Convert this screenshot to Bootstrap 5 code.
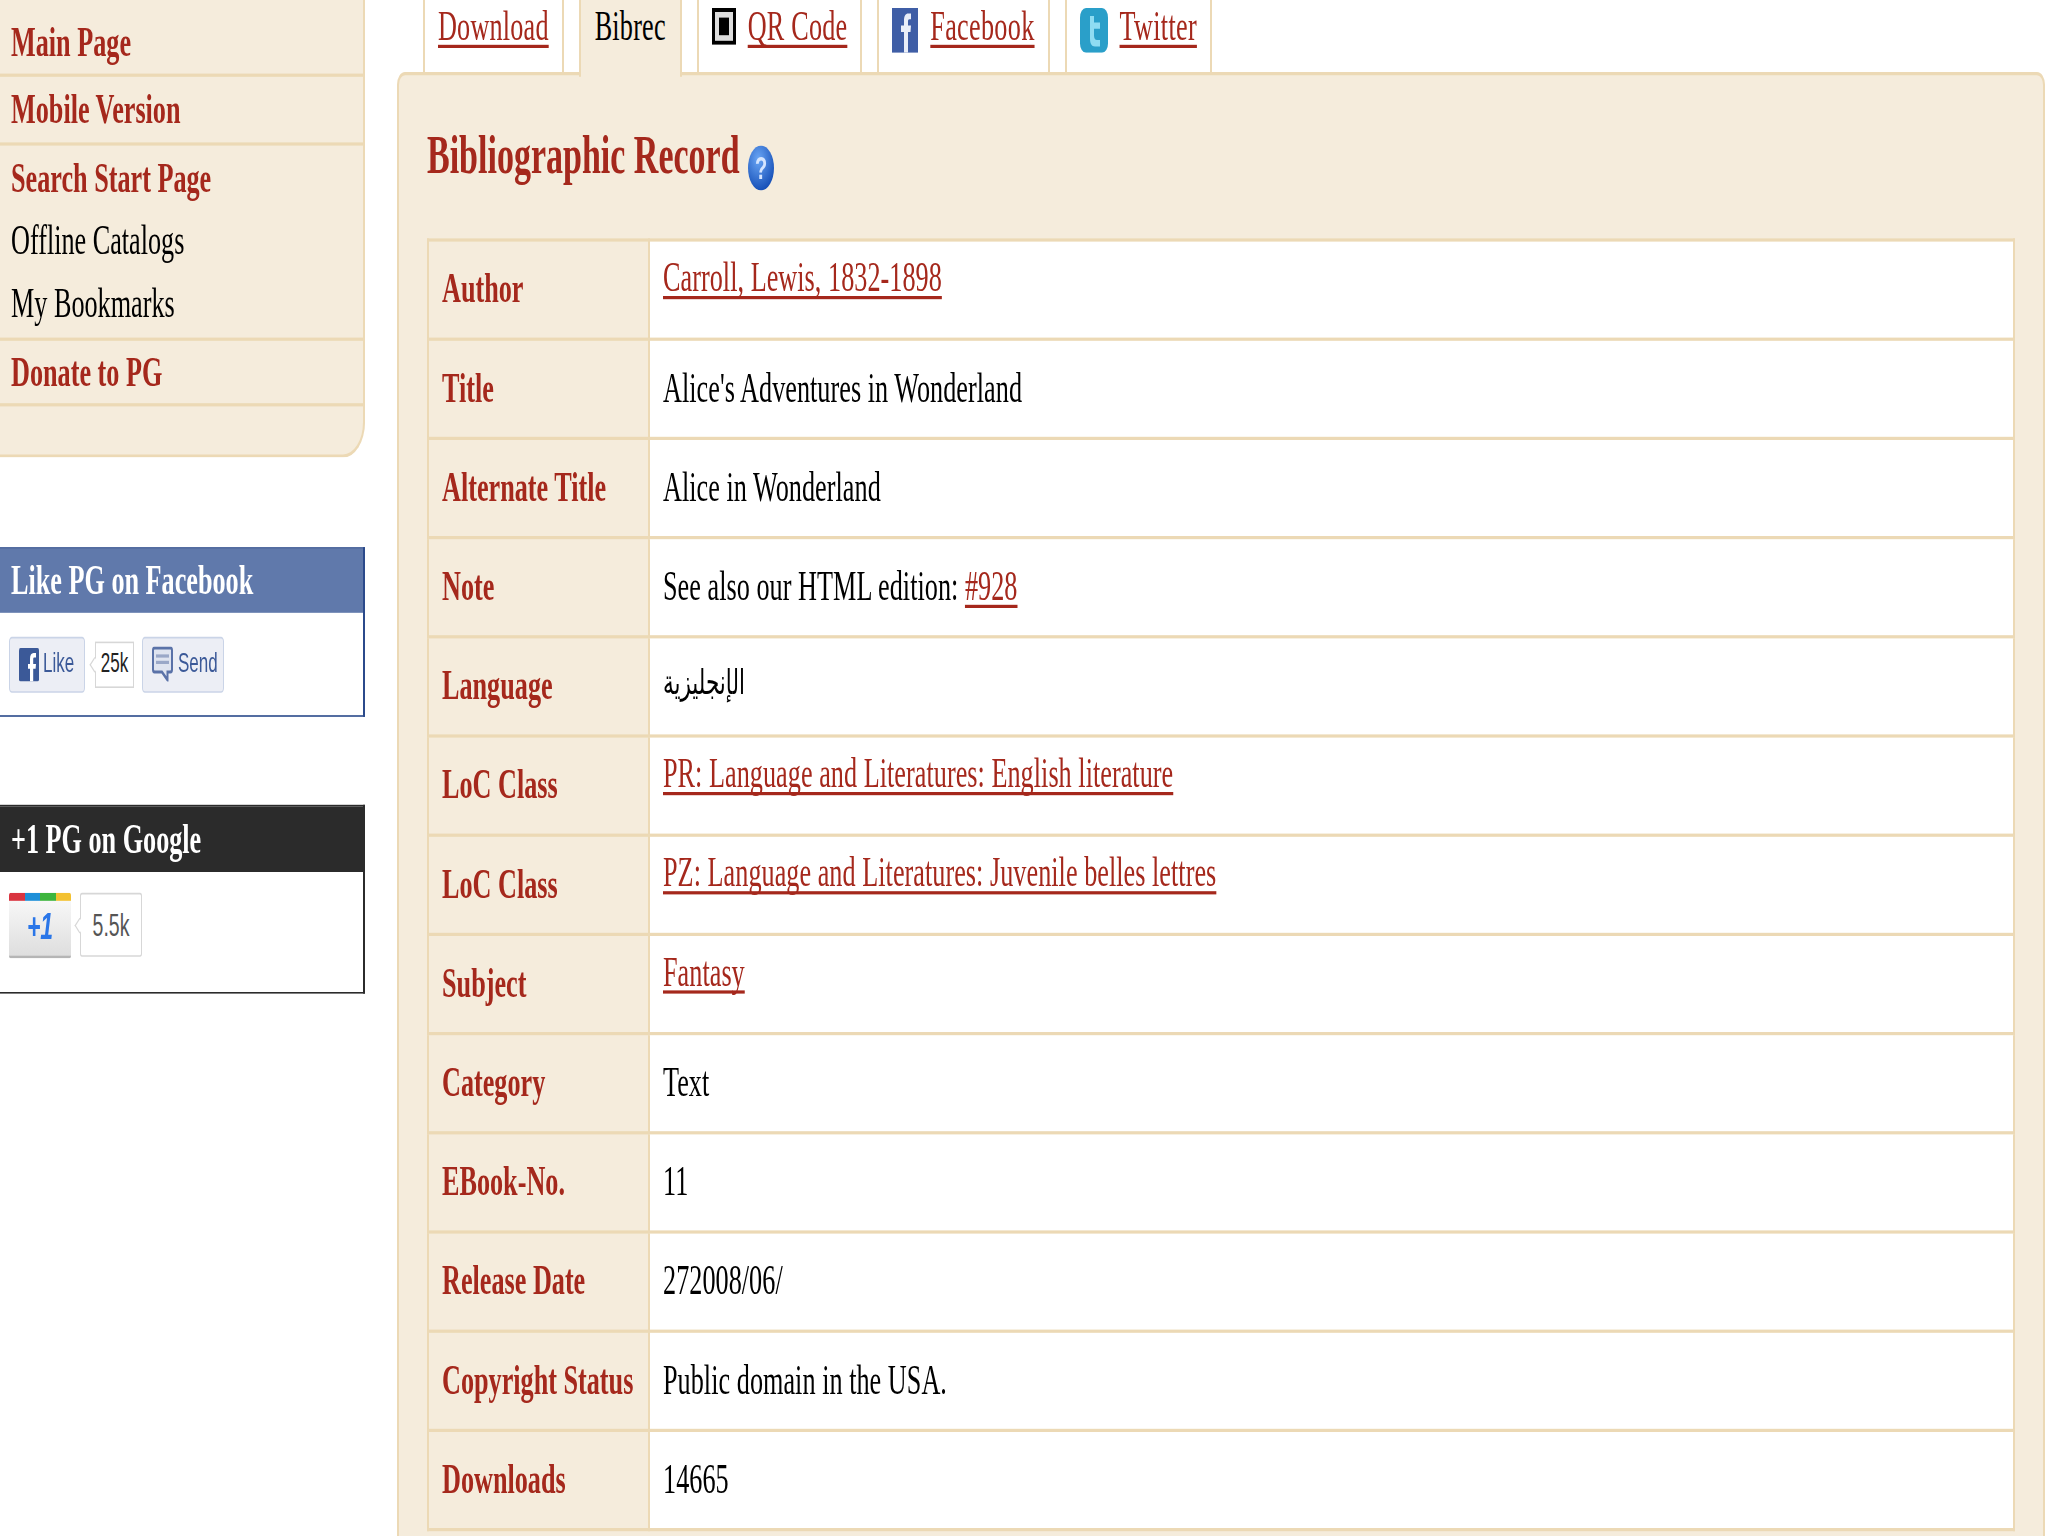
<!doctype html>
<html lang="en"><head><meta charset="utf-8"><title>Bibliographic Record</title>
<link href="https://cdn.jsdelivr.net/npm/bootstrap@5.3.0/dist/css/bootstrap.min.css" rel="stylesheet">
<style>
html{overflow:hidden;background:#fff}
body{margin:0;height:1536px;background:#fff;font-family:"Liberation Serif","DejaVu Sans",serif;font-size:26.2px;color:#000}
.stage{width:2048px;height:960px;transform:scale(1,1.6);transform-origin:0 0}
a.pg{color:#a5281c;text-decoration:underline;text-decoration-thickness:2px;text-underline-offset:3px;text-decoration-skip-ink:none}
.rail{width:365px;flex:none}
.menu{background:#f5ecdc;border:solid #ecd9b5;border-width:0 2px 2px 0;border-bottom-right-radius:22px}
.menu-group{border-bottom:2px solid #ecd9b5;padding:0 0 0 11px}
.menu-group>div{line-height:39.3px}
.menu-link{color:#a5281c;font-weight:700}
.g1{padding-top:6.5px}.g2{padding-top:1px;padding-bottom:1px}.g3{padding-top:.5px;padding-bottom:1.500px}.g4{padding-top:0;padding-bottom:0}
.menu-end{height:30px}
.social{margin-top:56px;background:#fff;border-style:solid;border-width:1.5px 2px 1.5px 0}
.social-fb{border-color:#2b4a8b}
.social-gp{border-color:#2b2b2b;margin-top:55px}
.social-head{height:40px;line-height:40px;padding-left:11px;color:#fff;font-weight:700}
.social-fb .social-head{background:#6079ab}
.social-gp .social-head{background:#2b2b2b;height:41px;line-height:41px}
.social-fb .social-body{height:63.5px;padding:14.5px 0 0 9px}
.social-gp .social-body{height:75.5px;padding:13.5px 0 0 9px}
.fbbtn{height:35px;background:#eceef5;border:1px solid #cad4e7;border-radius:3px;color:#3b5998;font:17px "Liberation Sans",sans-serif}
.fb-like{width:76px;padding-left:9px;gap:4px}
.fb-send{width:82px;padding-left:9px;gap:5px;margin-left:8px}
.fb-count{width:39px;height:29px;margin:3px 0 0 10px;background:#fff;border:1px solid #d7d7d7;font:17px "Liberation Sans",sans-serif;color:#222}
.nub{position:absolute;left:-5px;top:50%;width:7px;height:7px;margin-top:-3.5px;background:#fff;border-left:1px solid #d7d7d7;border-bottom:1px solid #d7d7d7;transform:rotate(45deg)}
.plus{width:62px;height:41px;background:linear-gradient(#fbfbfb,#dedede);border-bottom:2px solid #b5b5b5;border-radius:2px;overflow:hidden}
.plus-strip{height:5px}
.plus-strip i{flex:1}
.plus-mark{font:italic 700 23px/32px "Liberation Sans",sans-serif;color:#2a76e8;text-align:center}
.gp-count{width:62px;height:40px;margin-left:9px;background:#fff;border:1px solid #d7d7d7;border-radius:2px;font:19.5px "Liberation Sans",sans-serif;color:#555}
.work{width:1648px;margin-left:32px;flex:none}
.tabs{height:45px;margin-left:26px;gap:15px}
.tab-item{height:45px;padding:1px 13px 0;border:solid #ecd9b5;border-width:0 2px;line-height:31px;gap:12px;letter-spacing:.2px}
.tab-on{height:47.5px;background:#f5ecdc;position:relative;padding:1px 14px 0}
.tab-wide{letter-spacing:.3px}
.panel-box{height:915px;background:#f5ecdc;border:solid #ecd9b5;border-width:2.5px 2px 0;border-top-left-radius:8px;border-top-right-radius:8px;padding:30.2px 28px 0}
.rec-title{height:40px;margin:0 0 31.8px;font:700 34px/40px "Liberation Serif",serif;color:#a5281c;gap:8px}
.help-mark{margin-top:14px}
.rec-table{width:1588px;margin:0;border-collapse:collapse;--bs-table-bg:transparent;--bs-table-color:#000;--bs-table-border-color:#ecd9b5}
.rec-table>tbody>tr>*{height:62px;border:2px solid #ecd9b5;padding:0 13px;vertical-align:middle;line-height:32px;box-shadow:none}
.rec-table th{width:221px;background:#f5ecdc;color:#a5281c;font-weight:700;white-space:nowrap}
.rec-table td{background:#fff;font-weight:400;letter-spacing:.04px}
.rec-table td.top-cell{padding-bottom:14px}
.rec-table td.lang-cell{padding-bottom:4px}
.arabic{font-family:"DejaVu Sans",sans-serif;font-size:21.5px}
</style></head>
<body>
<div class="stage d-flex">
  <aside class="rail">
    <div class="menu">
      <div class="menu-group g1"><div class="menu-link">Main Page</div></div>
      <div class="menu-group g2"><div class="menu-link">Mobile Version</div></div>
      <div class="menu-group g3"><div class="menu-link">Search Start Page</div><div>Offline Catalogs</div><div>My Bookmarks</div></div>
      <div class="menu-group g4"><div class="menu-link">Donate to PG</div></div>
      <div class="menu-end"></div>
    </div>
    <div class="social social-fb">
      <div class="social-head">Like PG on Facebook</div>
      <div class="social-body d-flex align-items-start">
        <div class="fbbtn fb-like d-flex align-items-center">
          <svg width="20" height="21" viewBox="0 0 20 21"><rect width="20" height="21" rx="1.5" fill="#3b5998"/><path d="M11 21v-8H9V10h2V7c0-2.5 1.3-3.8 3.6-3.8H17v2.8h-1.6c-.9 0-1.2.4-1.2 1.2V10H17l-.4 3h-2.4v8z" fill="#fff"/></svg>
          <span>Like</span>
        </div>
        <div class="fb-count position-relative d-flex align-items-center justify-content-center"><span class="nub"></span>25k</div>
        <div class="fbbtn fb-send d-flex align-items-center">
          <svg width="21" height="22" viewBox="0 0 21 22"><path d="M2.5 1h16A1.5 1.5 0 0 1 20 2.500v12a1.500 1.500 0 0 1-1.500 1.500H15.500v5L10 16H2.500A1.500 1.500 0 0 1 1 14.500v-12A1.500 1.500 0 0 1 2.500 1z" fill="#dfe4f0" stroke="#5a72a8" stroke-width="2"/><rect x="4" y="5" width="13" height="2" fill="#9aa8c8"/><rect x="4" y="9" width="13" height="2" fill="#9aa8c8"/></svg>
          <span>Send</span>
        </div>
      </div>
    </div>
    <div class="social social-gp">
      <div class="social-head">+1 PG on Google</div>
      <div class="social-body d-flex align-items-start">
        <div class="plus">
          <div class="plus-strip d-flex"><i style="background:#d9343f"></i><i style="background:#1d8fd8"></i><i style="background:#3db53d"></i><i style="background:#f3c130"></i></div>
          <div class="plus-mark">+1</div>
        </div>
        <div class="gp-count position-relative d-flex align-items-center justify-content-center"><span class="nub"></span>5.5k</div>
      </div>
    </div>
  </aside>
  <main class="work">
    <div class="tabs d-flex align-items-start">
      <div class="tab-item d-flex align-items-start"><a class="pg" href="#">Download</a></div>
      <div class="tab-item tab-on d-flex align-items-start">Bibrec</div>
      <div class="tab-item d-flex align-items-start">
        <svg class="mt-1" width="24" height="23" viewBox="0 0 24 23"><rect width="24" height="23" fill="#000"/><rect x="3" y="2.500" width="18" height="18" fill="#ddd"/><rect x="7" y="6" width="10" height="11" fill="#000"/></svg>
        <a class="pg" href="#">QR Code</a></div>
      <div class="tab-item tab-wide d-flex align-items-start">
        <svg class="mt-1" width="26" height="28" viewBox="0 0 26 28"><rect width="26" height="28" fill="#3f5ea6"/><path d="M12 28V15H9v-4h3V8c0-3 1.700-4.500 4.200-4.500H19V7h-1.600c-1 0-1.400.5-1.400 1.400V11h3l-.5 4H16v13z" fill="#e9eef8"/></svg>
        <a class="pg" href="#">Facebook</a></div>
      <div class="tab-item tab-wide d-flex align-items-start">
        <svg class="mt-1" width="28" height="28" viewBox="0 0 28 28"><rect width="28" height="28" rx="6" fill="#2a9fc9"/><path d="M10 5h4v4h6v4h-6v4c0 2 1 3 3 3h3v4h-5c-3.500 0-5-2-5-5z" fill="#8fdcf2"/></svg>
        <a class="pg" href="#">Twitter</a></div>
    </div>
    <div class="panel-box">
      <h1 class="rec-title d-flex align-items-start">Bibliographic Record
        <svg class="help-mark" width="26" height="28" viewBox="0 0 26 28"><defs><radialGradient id="hb" cx=".4" cy=".3" r=".8"><stop offset="0" stop-color="#6aa6f5"/><stop offset="1" stop-color="#0c45b0"/></radialGradient></defs><ellipse cx="13" cy="14" rx="13" ry="14" fill="url(#hb)"/><text x="13" y="21" text-anchor="middle" font-family="Liberation Sans" font-size="20" fill="#d5e5ff">?</text></svg>
      </h1>
      <table class="table rec-table"><tbody>
        <tr><th>Author</th><td class="top-cell"><a class="pg" href="#">Carroll, Lewis, 1832-1898</a></td></tr>
        <tr><th>Title</th><td>Alice's Adventures in Wonderland</td></tr>
        <tr><th>Alternate Title</th><td>Alice in Wonderland</td></tr>
        <tr><th>Note</th><td>See also our HTML edition: <a class="pg" href="#">#928</a></td></tr>
        <tr><th>Language</th><td class="lang-cell"><span class="arabic">الإنجليزية</span></td></tr>
        <tr><th>LoC Class</th><td class="top-cell"><a class="pg" href="#">PR: Language and Literatures: English literature</a></td></tr>
        <tr><th>LoC Class</th><td class="top-cell"><a class="pg" href="#">PZ: Language and Literatures: Juvenile belles lettres</a></td></tr>
        <tr><th>Subject</th><td class="top-cell"><a class="pg" href="#">Fantasy</a></td></tr>
        <tr><th>Category</th><td>Text</td></tr>
        <tr><th>EBook-No.</th><td>11</td></tr>
        <tr><th>Release Date</th><td>272008/06/</td></tr>
        <tr><th>Copyright Status</th><td>Public domain in the USA.</td></tr>
        <tr><th>Downloads</th><td>14665</td></tr>
      </tbody></table>
    </div>
  </main>
</div>
<script src="https://cdn.jsdelivr.net/npm/bootstrap@5.3.0/dist/js/bootstrap.bundle.min.js"></script>
</body></html>
